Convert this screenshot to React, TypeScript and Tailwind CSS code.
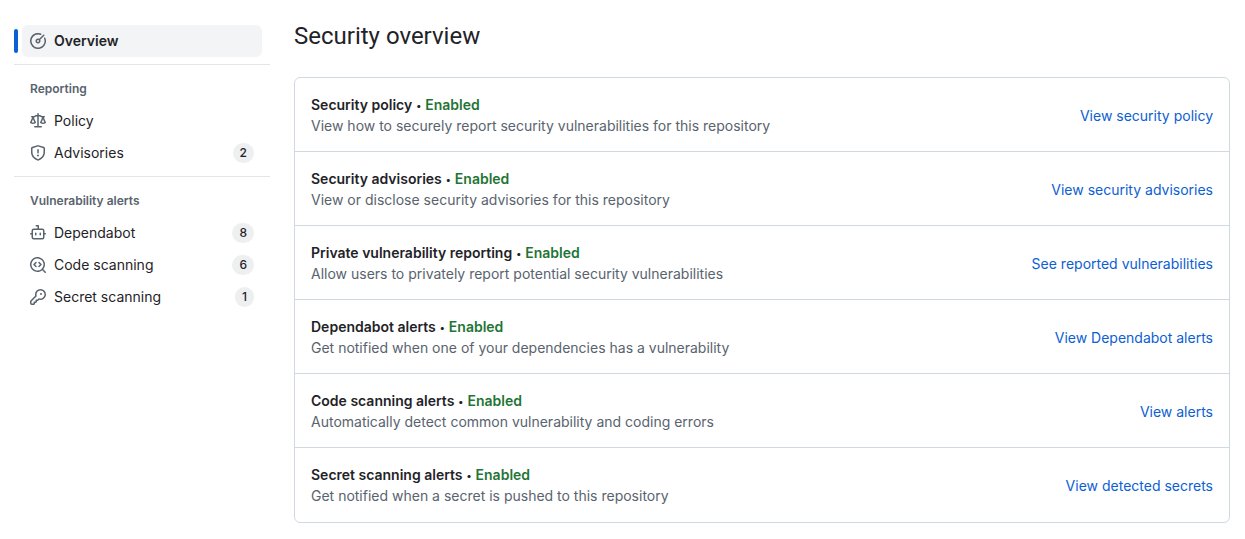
import type { ReactNode } from 'react';

const ICONS = {
  meter: [
    'M8 1.5a6.5 6.5 0 1 0 6.016 4.035.75.75 0 0 1 1.388-.57 8 8 0 1 1-4.37-4.37.75.75 0 0 1-.569 1.389A6.473 6.473 0 0 0 8 1.5Zm6.28.22a.75.75 0 0 1 0 1.06l-4.063 4.064a2.5 2.5 0 1 1-1.06-1.06L13.22 1.72a.75.75 0 0 1 1.06 0ZM7 8a1 1 0 1 0 2 0 1 1 0 0 0-2 0Z',
  ],
  law: [
    'M8.75.75V2h.985c.304 0 .603.08.867.231l1.29.736c.038.022.08.033.124.033h2.234a.75.75 0 0 1 0 1.5h-.427l2.111 4.692a.75.75 0 0 1-.154.838l-.53-.53.529.531-.001.002-.002.002-.006.006-.006.005-.01.01-.045.04c-.21.176-.441.327-.686.45C14.556 10.78 13.88 11 13 11a4.498 4.498 0 0 1-2.023-.454 3.544 3.544 0 0 1-.686-.45l-.045-.04-.016-.015-.006-.006-.004-.004v-.001a.75.75 0 0 1-.154-.838L12.178 4.5h-.162c-.305 0-.604-.079-.868-.231l-1.29-.736a.245.245 0 0 0-.124-.033H8.75V13h2.5a.75.75 0 0 1 0 1.5h-6.5a.75.75 0 0 1 0-1.5h2.5V3.5h-.984a.245.245 0 0 0-.124.033l-1.289.737c-.265.15-.564.23-.869.23h-.162l2.112 4.692a.75.75 0 0 1-.154.838l-.53-.53.529.531-.001.002-.002.002-.006.006-.016.015-.045.04c-.21.176-.441.327-.686.45C4.556 10.78 3.88 11 3 11a4.498 4.498 0 0 1-2.023-.454 3.544 3.544 0 0 1-.686-.45l-.045-.04-.016-.015-.006-.006-.004-.004v-.001a.75.75 0 0 1-.154-.838L2.178 4.5H1.75a.75.75 0 0 1 0-1.5h2.234a.249.249 0 0 0 .125-.033l1.288-.737c.265-.15.564-.23.869-.23h.984V.75a.75.75 0 0 1 1.5 0Zm2.945 8.477c.285.135.718.273 1.305.273s1.02-.138 1.305-.273L13 6.327Zm-10 0c.285.135.718.273 1.305.273s1.02-.138 1.305-.273L3 6.327Z',
  ],
  shield: [
    'M7.467.133a1.748 1.748 0 0 1 1.066 0l5.25 1.68A1.75 1.75 0 0 1 15 3.48V7c0 1.566-.32 3.182-1.303 4.682-.983 1.498-2.585 2.813-5.032 3.855a1.697 1.697 0 0 1-1.33 0c-2.447-1.042-4.049-2.357-5.032-3.855C1.32 10.182 1 8.566 1 7V3.48a1.75 1.75 0 0 1 1.217-1.667Zm.61 1.429a.25.25 0 0 0-.153 0l-5.25 1.68a.25.25 0 0 0-.174.238V7c0 1.358.275 2.666 1.057 3.86.784 1.194 2.121 2.34 4.366 3.297a.196.196 0 0 0 .154 0c2.245-.956 3.582-2.104 4.366-3.298C13.225 9.666 13.5 8.36 13.5 7V3.48a.251.251 0 0 0-.174-.237l-5.25-1.68ZM8.75 4.75v3a.75.75 0 0 1-1.5 0v-3a.75.75 0 0 1 1.5 0ZM9 10.5a1 1 0 1 1-2 0 1 1 0 0 1 2 0Z',
  ],
  bot: [
    'M5.75 7.5a.75.75 0 0 1 .75.75v1.5a.75.75 0 0 1-1.5 0v-1.5a.75.75 0 0 1 .75-.75Zm5.25.75a.75.75 0 0 0-1.5 0v1.5a.75.75 0 0 0 1.5 0v-1.5Z',
    'M6.25 0h2A.75.75 0 0 1 9 .75V3.5h3.25a2.25 2.25 0 0 1 2.25 2.25V8h.75a.75.75 0 0 1 0 1.5h-.75v2.75a2.25 2.25 0 0 1-2.25 2.25h-8.5a2.25 2.25 0 0 1-2.25-2.25V9.5H.75a.75.75 0 0 1 0-1.5h.75V5.75A2.25 2.25 0 0 1 3.75 3.5H7.5v-2H6.25a.75.75 0 0 1 0-1.5ZM3 5.75v6.5c0 .414.336.75.75.75h8.5a.75.75 0 0 0 .75-.75v-6.5a.75.75 0 0 0-.75-.75h-8.5a.75.75 0 0 0-.75.75Z',
  ],
  codescan: [
    'M8.47 4.97a.75.75 0 0 0 0 1.06L9.94 7.5 8.47 8.97a.75.75 0 1 0 1.06 1.06l2-2a.75.75 0 0 0 0-1.06l-2-2a.75.75 0 0 0-1.06 0ZM6.53 6.03a.75.75 0 0 0-1.06-1.06l-2 2a.75.75 0 0 0 0 1.06l2 2a.75.75 0 1 0 1.06-1.06L5.06 7.5l1.47-1.47Z',
    'M12.246 13.307a7.501 7.501 0 1 1 1.06-1.06l2.474 2.473a.749.749 0 1 1-1.06 1.06l-2.474-2.473ZM1.5 7.5a6.002 6.002 0 0 0 3.608 5.504 6.002 6.002 0 0 0 6.486-1.117.748.748 0 0 1 .292-.293A6 6 0 1 0 1.5 7.5Z',
  ],
  key: [
    'M10.5 0a5.499 5.499 0 1 1-1.288 10.848l-.932.932a.749.749 0 0 1-.53.22H7v.75a.749.749 0 0 1-.22.53l-.5.5a.749.749 0 0 1-.53.22H5v.75a.749.749 0 0 1-.22.53l-.5.5a.749.749 0 0 1-.53.22h-2A1.75 1.75 0 0 1 0 14.25v-2c0-.199.079-.389.22-.53l4.932-4.932A5.5 5.5 0 0 1 10.5 0Zm-4 5.5c-.001.431.069.86.205 1.269a.75.75 0 0 1-.181.768L1.5 12.56v1.69c0 .138.112.25.25.25h1.69l.06-.06v-1.19a.75.75 0 0 1 .75-.75h1.19l.06-.06v-1.19a.75.75 0 0 1 .75-.75h1.19l1.023-1.025a.75.75 0 0 1 .768-.18A4 4 0 1 0 6.5 5.5ZM11 6a1 1 0 1 1 0-2 1 1 0 0 1 0 2Z',
  ],
};

type IconName = keyof typeof ICONS;

function Icon({ name }: { name: IconName }) {
  return (
    <svg viewBox="0 0 16 16" className="size-4 shrink-0 fill-[#59636e]" aria-hidden="true">
      {ICONS[name].map((d) => (
        <path key={d} d={d} />
      ))}
    </svg>
  );
}

function NavItem({ icon, label, count }: { icon: IconName; label: string; count?: number }) {
  return (
    <li>
      <a href="#" className="mx-2 flex h-8 items-center gap-2 rounded-md px-2 hover:bg-[#f3f4f6]">
        <Icon name={icon} />
        <span className="flex-1">{label}</span>
        {count !== undefined && (
          <span className="rounded-full bg-[#eeeff1] px-[7px] text-xs leading-5 font-medium">{count}</span>
        )}
      </a>
    </li>
  );
}

function NavGroup({ title, children }: { title: string; children: ReactNode }) {
  return (
    <section className="mt-[7px] border-t border-[#e3e6ea] pt-2">
      <h2 className="px-4 text-xs leading-8 font-semibold text-[#59636e]">{title}</h2>
      <ul>{children}</ul>
    </section>
  );
}

const FEATURES = [
  { title: 'Security policy', text: 'View how to securely report security vulnerabilities for this repository', link: 'View security policy' },
  { title: 'Security advisories', text: 'View or disclose security advisories for this repository', link: 'View security advisories' },
  { title: 'Private vulnerability reporting', text: 'Allow users to privately report potential security vulnerabilities', link: 'See reported vulnerabilities' },
  { title: 'Dependabot alerts', text: 'Get notified when one of your dependencies has a vulnerability', link: 'View Dependabot alerts' },
  { title: 'Code scanning alerts', text: 'Automatically detect common vulnerability and coding errors', link: 'View alerts' },
  { title: 'Secret scanning alerts', text: 'Get notified when a secret is pushed to this repository', link: 'View detected secrets' },
];

export default function App() {
  return (
    <div className="flex items-start gap-6 bg-white pt-[25px] pr-[15px] pb-4 pl-[14px] font-['Inter',sans-serif] text-sm text-[#1f2328]">
      <nav className="w-64 shrink-0" aria-label="Security">
        <a href="#" aria-current="page" className="flex items-center gap-1 pr-2 font-semibold">
          <span className="h-6 w-1 rounded-md bg-[#0b60d3]" />
          <span className="flex h-8 flex-1 items-center gap-2 rounded-md bg-[#f3f4f6] px-2">
            <Icon name="meter" />
            Overview
          </span>
        </a>
        <NavGroup title="Reporting">
          <NavItem icon="law" label="Policy" />
          <NavItem icon="shield" label="Advisories" count={2} />
        </NavGroup>
        <NavGroup title="Vulnerability alerts">
          <NavItem icon="bot" label="Dependabot" count={8} />
          <NavItem icon="codescan" label="Code scanning" count={6} />
          <NavItem icon="key" label="Secret scanning" count={1} />
        </NavGroup>
      </nav>

      <main className="min-w-0 flex-1">
        <h1 className="font-['Roboto','Inter',sans-serif] text-2xl leading-[22px]">Security overview</h1>
        <ul className="mt-[30px] divide-y divide-[#d1d9e0] rounded-md border border-[#d1d9e0]">
          {FEATURES.map((f) => (
            <li key={f.title} className="flex items-center justify-between gap-4 px-4 pt-[17px] pb-[15px] last:pb-4">
              <div className="flex flex-col gap-px leading-5">
                <h3 className="flex items-center gap-1 font-semibold">
                  {f.title}
                  <span className="text-[10px] leading-5">•</span>
                  <span className="text-[#1f7535]">Enabled</span>
                </h3>
                <p className="text-[#59636e]">{f.text}</p>
              </div>
              <a href="#" className="shrink-0 text-[#0b60d3] hover:underline">
                {f.link}
              </a>
            </li>
          ))}
        </ul>
      </main>
    </div>
  );
}
